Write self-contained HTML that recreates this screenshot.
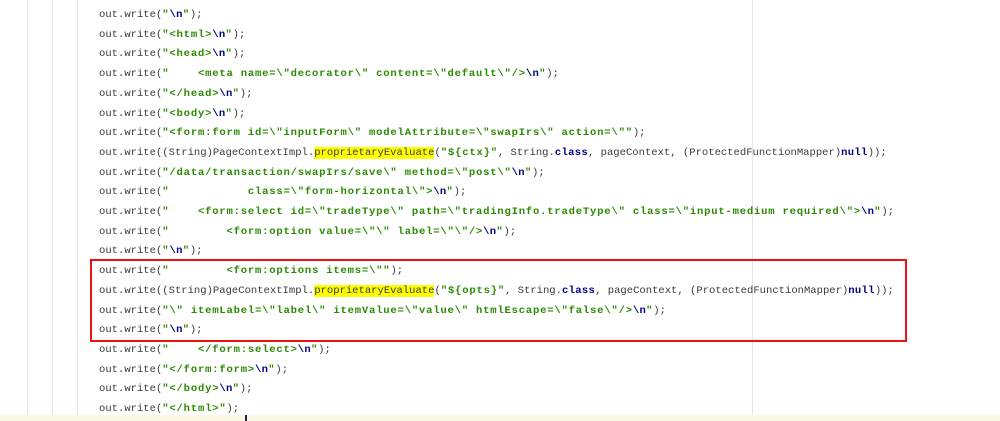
<!DOCTYPE html>
<html><head><meta charset="utf-8"><style>
html,body{margin:0;padding:0;width:1000px;height:421px;overflow:hidden;background:#fff;position:relative}
.v{position:absolute;top:0;width:1px;height:421px;background:#e6e6e6}
#code{position:absolute;left:99px;top:6px;font-family:"Liberation Mono",monospace;font-size:10.55px;line-height:19.7px;color:#3a3a3a;white-space:pre}
.s{color:#2a8a00;font-weight:bold;letter-spacing:0.8px}
.k{color:#000080;font-weight:bold;letter-spacing:0.3px}
.h{background:#ffff00}
#box{position:absolute;left:90px;top:259px;width:813px;height:79px;border:2px solid #ee1111}
#cur{position:absolute;left:0;top:415px;width:1000px;height:6px;background:#fbf8e8}
</style></head><body>
<div class="v" style="left:27px"></div>
<div class="v" style="left:52px"></div>
<div class="v" style="left:77px"></div>
<div class="v" style="left:752px"></div>
<div id="cur"></div>
<div style="position:absolute;left:245px;top:415px;width:2px;height:6px;background:#224"></div>
<div id="code">out.write(<span class="s">"<span class="k">\n</span>"</span>);
out.write(<span class="s">"&lt;html&gt;<span class="k">\n</span>"</span>);
out.write(<span class="s">"&lt;head&gt;<span class="k">\n</span>"</span>);
out.write(<span class="s">"    &lt;meta name=\"decorator\" content=\"default\"/&gt;<span class="k">\n</span>"</span>);
out.write(<span class="s">"&lt;/head&gt;<span class="k">\n</span>"</span>);
out.write(<span class="s">"&lt;body&gt;<span class="k">\n</span>"</span>);
out.write(<span class="s">"&lt;form:form id=\"inputForm\" modelAttribute=\"swapIrs\" action=\""</span>);
out.write((String)PageContextImpl.<span class="h">proprietaryEvaluate</span>(<span class="s">"${ctx}"</span>, String.<span class="k">class</span>, pageContext, (ProtectedFunctionMapper)<span class="k">null</span>));
out.write(<span class="s">"/data/transaction/swapIrs/save\" method=\"post\"<span class="k">\n</span>"</span>);
out.write(<span class="s">"           class=\"form-horizontal\"&gt;<span class="k">\n</span>"</span>);
out.write(<span class="s">"    &lt;form:select id=\"tradeType\" path=\"tradingInfo.tradeType\" class=\"input-medium required\"&gt;<span class="k">\n</span>"</span>);
out.write(<span class="s">"        &lt;form:option value=\"\" label=\"\"/&gt;<span class="k">\n</span>"</span>);
out.write(<span class="s">"<span class="k">\n</span>"</span>);
out.write(<span class="s">"        &lt;form:options items=\""</span>);
out.write((String)PageContextImpl.<span class="h">proprietaryEvaluate</span>(<span class="s">"${opts}"</span>, String.<span class="k">class</span>, pageContext, (ProtectedFunctionMapper)<span class="k">null</span>));
out.write(<span class="s">"\" itemLabel=\"label\" itemValue=\"value\" htmlEscape=\"false\"/&gt;<span class="k">\n</span>"</span>);
out.write(<span class="s">"<span class="k">\n</span>"</span>);
out.write(<span class="s">"    &lt;/form:select&gt;<span class="k">\n</span>"</span>);
out.write(<span class="s">"&lt;/form:form&gt;<span class="k">\n</span>"</span>);
out.write(<span class="s">"&lt;/body&gt;<span class="k">\n</span>"</span>);
out.write(<span class="s">"&lt;/html&gt;"</span>);</div>
<div id="box"></div>
</body></html>
